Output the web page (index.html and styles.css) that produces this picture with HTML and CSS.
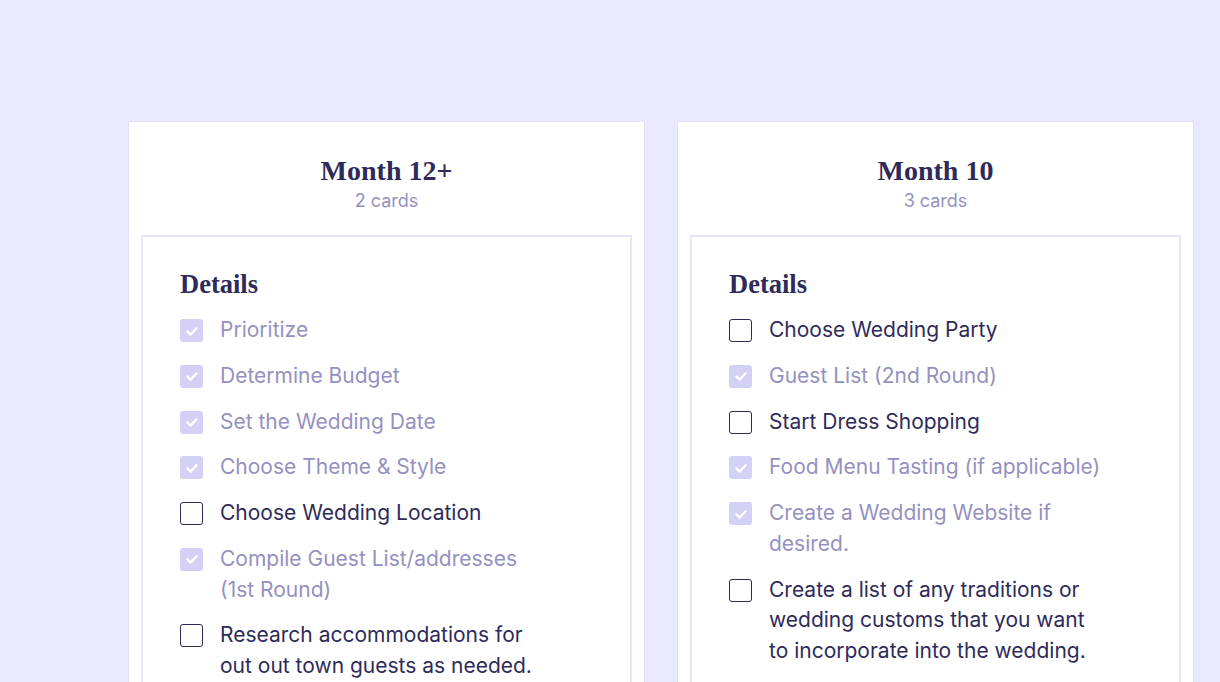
FILE: index.html
```html
<!DOCTYPE html>
<html>
<head>
<meta charset="utf-8">
<link rel="stylesheet" href="styles.css">
</head>
<body>
<div class="board">
  <section class="column">
    <header class="col-head">
      <h2 class="col-title">Month 12+</h2>
      <div class="col-count">2 cards</div>
    </header>
    <div class="card">
      <h3 class="card-title">Details</h3>
      <ul class="tasks">
        <li class="task done"><span class="box"><svg viewBox="0 0 24 24"><path d="M6.5 12.5l3.8 3.8 7.2-7.6"/></svg></span><span class="label">Prioritize</span></li>
        <li class="task done"><span class="box"><svg viewBox="0 0 24 24"><path d="M6.5 12.5l3.8 3.8 7.2-7.6"/></svg></span><span class="label">Determine Budget</span></li>
        <li class="task done"><span class="box"><svg viewBox="0 0 24 24"><path d="M6.5 12.5l3.8 3.8 7.2-7.6"/></svg></span><span class="label">Set the Wedding Date</span></li>
        <li class="task done"><span class="box"><svg viewBox="0 0 24 24"><path d="M6.5 12.5l3.8 3.8 7.2-7.6"/></svg></span><span class="label">Choose Theme &amp; Style</span></li>
        <li class="task"><span class="box"></span><span class="label">Choose Wedding Location</span></li>
        <li class="task done"><span class="box"><svg viewBox="0 0 24 24"><path d="M6.5 12.5l3.8 3.8 7.2-7.6"/></svg></span><span class="label">Compile Guest List/addresses (1st Round)</span></li>
        <li class="task"><span class="box"></span><span class="label">Research accommodations for out out town guests as needed.</span></li>
      </ul>
    </div>
  </section>
  <section class="column">
    <header class="col-head">
      <h2 class="col-title">Month 10</h2>
      <div class="col-count">3 cards</div>
    </header>
    <div class="card">
      <h3 class="card-title">Details</h3>
      <ul class="tasks">
        <li class="task"><span class="box"></span><span class="label">Choose Wedding Party</span></li>
        <li class="task done"><span class="box"><svg viewBox="0 0 24 24"><path d="M6.5 12.5l3.8 3.8 7.2-7.6"/></svg></span><span class="label">Guest List (2nd Round)</span></li>
        <li class="task"><span class="box"></span><span class="label">Start Dress Shopping</span></li>
        <li class="task done"><span class="box"><svg viewBox="0 0 24 24"><path d="M6.5 12.5l3.8 3.8 7.2-7.6"/></svg></span><span class="label">Food Menu Tasting (if applicable)</span></li>
        <li class="task done"><span class="box"><svg viewBox="0 0 24 24"><path d="M6.5 12.5l3.8 3.8 7.2-7.6"/></svg></span><span class="label">Create a Wedding Website if desired.</span></li>
        <li class="task"><span class="box"></span><span class="label">Create a list of any traditions or wedding customs that you want to incorporate into the wedding.</span></li>
      </ul>
    </div>
  </section>
</div>
</body>
</html>
```
FILE: styles.css
```css
html, body {
  margin: 0;
  padding: 0;
  background: #e8e8fe;
  height: 100%;
  overflow: hidden;
}
body {
  font-family: Inter, "Noto Sans", sans-serif;
  color: #2e2b5a;
}
.board {
  display: flex;
  gap: 34px;
  padding: 122px 0 0 129px;
}
.column {
  width: 515px;
  flex: none;
  background: #fff;
  box-shadow: 0 0 0 1px #e0e0f8;
  padding: 0 12px;
  box-sizing: border-box;
  height: 560px;
}
.col-head {
  text-align: center;
  padding-top: 32px;
  height: 113px;
  box-sizing: border-box;
}
.col-title {
  margin: 0;
  font-family: "Liberation Serif", "DejaVu Serif", serif;
  font-weight: 700;
  font-size: 28px;
  line-height: 34px;
  color: #2e2b5a;
}
.col-count {
  font-size: 18px;
  line-height: 26px;
  color: #9491c0;
}
.card {
  border: 2px solid #e6e6f8;
  padding: 32px 36px 40px 37px;
}
.card-title {
  margin: 0 0 16px 0;
  font-family: "Liberation Serif", "DejaVu Serif", serif;
  font-weight: 700;
  font-size: 26.5px;
  line-height: 30px;
  color: #2e2b5a;
}
.tasks {
  list-style: none;
  margin: 0;
  padding: 0;
  display: flex;
  flex-direction: column;
  gap: 15px;
}
.task {
  display: flex;
  align-items: flex-start;
  gap: 17px;
  font-size: 21px;
  line-height: 30.75px;
}
.box {
  flex: none;
  width: 23px;
  height: 23px;
  box-sizing: border-box;
  border: 1.5px solid #2e2b5a;
  border-radius: 3px;
  margin-top: 4px;
  display: flex;
  align-items: center;
  justify-content: center;
}
.task.done .box {
  border: none;
  background: #d3d1f5;
}
.box svg {
  width: 20px;
  height: 20px;
  fill: none;
  stroke: #fff;
  stroke-width: 2.8;
  stroke-linecap: round;
  stroke-linejoin: round;
}
.label {
  max-width: 336px;
  color: #2e2b5a;
}
.task.done .label {
  color: #9491c0;
}
```
